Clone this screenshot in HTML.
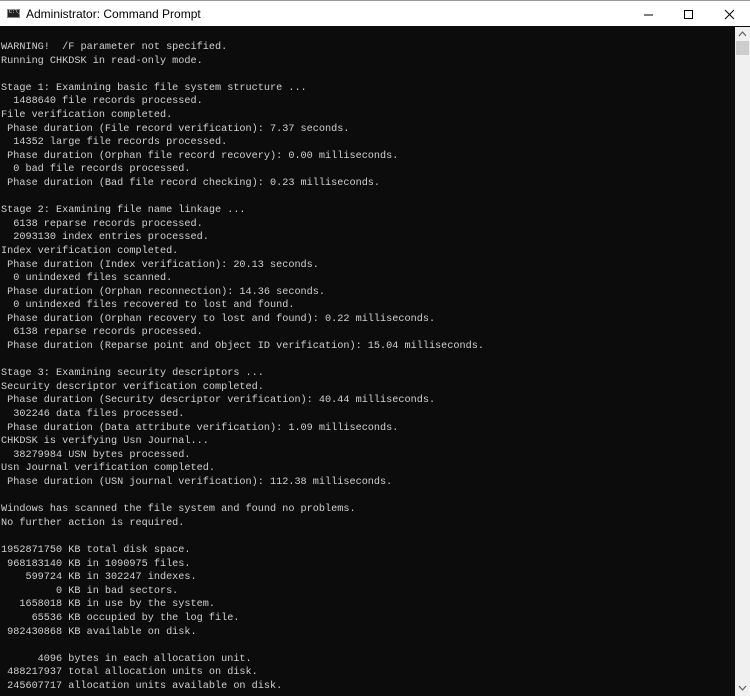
<!DOCTYPE html>
<html><head><style>
html,body{margin:0;padding:0;width:750px;height:696px;overflow:hidden;background:#0c0c0c}
.title{position:absolute;left:0;top:0;width:750px;height:26px;background:#fff;border-top:1px solid #9a9a9a;box-sizing:border-box;font-family:"Liberation Sans",sans-serif;font-size:12px;color:#000}
.title .t{position:absolute;left:26px;top:6px}
.ico{position:absolute;left:7px;top:8px;width:13px;height:9px;background:#222;border:1px solid #888;box-sizing:border-box}
.ico:after{content:"C:\\_";position:absolute;left:1px;top:-1px;font-size:5px;color:#fff;font-family:"Liberation Mono",monospace}
.con{position:absolute;left:0;top:27px;width:735px;height:669px;background:#0c0c0c}
pre{margin:0;position:absolute;left:1px;top:14px;font-family:"Liberation Mono",monospace;font-size:10.2px;line-height:13.6px;color:#d0d0d0}
.sb{position:absolute;left:735px;top:27px;width:15px;height:669px;background:#f0f0f0}
.thumb{position:absolute;left:736px;top:41px;width:13px;height:14px;background:#cdcdcd}
</style></head><body>
<div class="title"><div class="ico"></div><span class="t">Administrator: Command Prompt</span>
<svg style="position:absolute;left:640px;top:8px" width="100" height="12"><line x1="4" y1="6" x2="13" y2="6" stroke="#000"/><rect x="44.5" y="1.5" width="8" height="8" fill="none" stroke="#000"/><path d="M85 1 L94 10 M94 1 L85 10" stroke="#000"/></svg>
</div>
<div class="con"><pre>WARNING!  /F parameter not specified.
Running CHKDSK in read-only mode.

Stage 1: Examining basic file system structure ...
  1488640 file records processed.
File verification completed.
 Phase duration (File record verification): 7.37 seconds.
  14352 large file records processed.
 Phase duration (Orphan file record recovery): 0.00 milliseconds.
  0 bad file records processed.
 Phase duration (Bad file record checking): 0.23 milliseconds.

Stage 2: Examining file name linkage ...
  6138 reparse records processed.
  2093130 index entries processed.
Index verification completed.
 Phase duration (Index verification): 20.13 seconds.
  0 unindexed files scanned.
 Phase duration (Orphan reconnection): 14.36 seconds.
  0 unindexed files recovered to lost and found.
 Phase duration (Orphan recovery to lost and found): 0.22 milliseconds.
  6138 reparse records processed.
 Phase duration (Reparse point and Object ID verification): 15.04 milliseconds.

Stage 3: Examining security descriptors ...
Security descriptor verification completed.
 Phase duration (Security descriptor verification): 40.44 milliseconds.
  302246 data files processed.
 Phase duration (Data attribute verification): 1.09 milliseconds.
CHKDSK is verifying Usn Journal...
  38279984 USN bytes processed.
Usn Journal verification completed.
 Phase duration (USN journal verification): 112.38 milliseconds.

Windows has scanned the file system and found no problems.
No further action is required.

1952871750 KB total disk space.
 968183140 KB in 1090975 files.
    599724 KB in 302247 indexes.
         0 KB in bad sectors.
   1658018 KB in use by the system.
     65536 KB occupied by the log file.
 982430868 KB available on disk.

      4096 bytes in each allocation unit.
 488217937 total allocation units on disk.
 245607717 allocation units available on disk.</pre></div>
<div class="sb"></div><div class="thumb"></div>
<svg style="position:absolute;left:737px;top:29px" width="11" height="10"><path d="M2 7 L5.5 3 L9 7" stroke="#606060" fill="none" stroke-width="1.2"/></svg>
<svg style="position:absolute;left:737px;top:683px" width="11" height="10"><path d="M2 3 L5.5 7 L9 3" stroke="#606060" fill="none" stroke-width="1.2"/></svg>
</body></html>
